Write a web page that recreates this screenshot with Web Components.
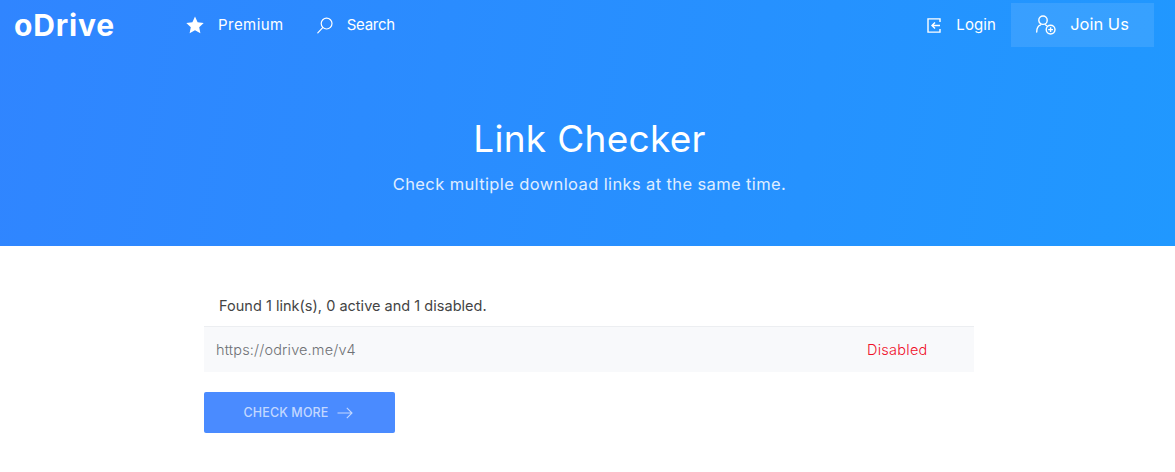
<!DOCTYPE html>
<html lang="en">
<head>
<meta charset="utf-8">
<title>oDrive - Link Checker</title>
<style>
  html, body { margin: 0; background: #fff; }
  body { font-family: Inter, "Noto Sans", sans-serif; }
</style>
</head>
<body>
<od-header>
  <od-nav slot="nav"></od-nav>
  <span slot="title">Link Checker</span>
  <span slot="subtitle">Check multiple download links at the same time.</span>
</od-header>
<od-checker>
  <od-result url="https://odrive.me/v4" status="Disabled"></od-result>
</od-checker>

<script>
const ICONS = {
    star: `<svg width="18" height="18" viewBox="0 0 18 18"><path fill="#fff" d="M9 .6l2.6 5.7 6.1.7-4.5 4.2 1.2 6.1L9 14.3l-5.4 3 1.2-6.1L.3 7l6.1-.7z"/></svg>`,
    search: `<svg width="16" height="17" viewBox="0 0 16 17" fill="none" stroke="#fff" stroke-width="1.2"><circle cx="9.6" cy="6.6" r="5.4"/><path stroke-linecap="round" d="M5.7 10.6L.8 15.8"/></svg>`,
    login: `<svg width="14" height="15" viewBox="0 0 14 15" fill="none" stroke="#fff" stroke-width="1.4"><path d="M13 4V.9H1v13.2h12V11"/><path d="M13 7.5H5.2M8 4.6L5 7.5l3 2.9"/></svg>`,
    join: `<svg width="20" height="20" viewBox="0 0 20 20" fill="none" stroke="#fff" stroke-width="1.4"><circle cx="7" cy="5.2" r="4.2"/><path stroke-linecap="round" d="M.7 17c0-3.8 1.8-6.5 4-7.2M9.4 9.8c.6.2 1 .5 1.4.9"/><circle cx="14.6" cy="14.6" r="4.4"/><path d="M14.6 12.2v4.8M12.2 14.6h4.8"/></svg>`,
    arrow: `<svg width="16" height="12" viewBox="0 0 16 12" fill="none" stroke="currentColor" stroke-width="1.1"><path d="M.5 6h14.5M9.8.8L15 6l-5.2 5.2"/></svg>`
};

class OdNav extends HTMLElement {
    constructor() {
        super();
        this.attachShadow({ mode: 'open' });
        this.shadowRoot.innerHTML = `
        <style>
            :host { display: flex; align-items: center; height: 50px; padding: 0 21px 0 14px; color: #fff; font-size: 15px; }
            .logo { font-size: 30px; font-weight: 700; letter-spacing: .85px; width: 172px; line-height: 50px; }
            a { display: flex; align-items: center; color: inherit; text-decoration: none; }
            a span { position: relative; top: -1px; }
            .premium { gap: 14px; margin-right: 33px; letter-spacing: .45px; }
            .search { gap: 14px; letter-spacing: -.25px; }
            .spacer { flex: 1; }
            .login { gap: 15px; margin-right: 15px; letter-spacing: .1px; }
            .join { gap: 14px; width: 143px; height: 44px; justify-content: center; background: rgba(255,255,255,.1); font-size: 16.5px; box-sizing: border-box; }
        </style>
        <span class="logo">oDrive</span>
        <a class="premium" href="#">${ICONS.star}<span>Premium</span></a>
        <a class="search" href="#">${ICONS.search}<span>Search</span></a>
        <span class="spacer"></span>
        <a class="login" href="#">${ICONS.login}<span>Login</span></a>
        <a class="join" href="#">${ICONS.join}<span>Join Us</span></a>`;
    }
}
customElements.define('od-nav', OdNav);

class OdHeader extends HTMLElement {
    constructor() {
        super();
        this.attachShadow({ mode: 'open' });
        this.shadowRoot.innerHTML = `
        <style>
            :host { display: block; height: 246px; color: #fff; background: linear-gradient(100deg, #3085ff 0%, #2098ff 100%); }
            .hero { display: flex; flex-direction: column; align-items: center; padding: 65px 0 0 4px; }
            .title { font-size: 37px; line-height: 48px; font-weight: 400; letter-spacing: .3px; }
            .sub { font-size: 16.5px; line-height: 24px; margin-top: 9px; opacity: .85; letter-spacing: .38px; }
        </style>
        <slot name="nav"></slot>
        <div class="hero">
            <div class="title"><slot name="title"></slot></div>
            <div class="sub"><slot name="subtitle"></slot></div>
        </div>`;
    }
}
customElements.define('od-header', OdHeader);

class OdResult extends HTMLElement {
    constructor() {
        super();
        this.attachShadow({ mode: 'open' });
    }

    connectedCallback() {
        this.shadowRoot.innerHTML = `
        <style>
            :host { display: flex; align-items: center; height: 45px; background: #f8f9fb; border-top: 1px solid #eceef1; font-size: 14.5px; font-weight: 300; }
            .url { flex: 1; padding-left: 12px; color: #6f7175; letter-spacing: .15px; }
            .status { width: 107px; color: #f0102a; letter-spacing: .25px; }
        </style>
        <span class="url">${this.getAttribute('url')}</span>
        <span class="status">${this.getAttribute('status')}</span>`;
    }
}
customElements.define('od-result', OdResult);

class OdChecker extends HTMLElement {
    constructor() {
        super();
        this.attachShadow({ mode: 'open' });
        this.shadowRoot.innerHTML = `
        <style>
            :host { display: block; width: 770px; margin-left: 204px; padding-top: 40px; box-sizing: border-box; }
            .found { height: 40px; line-height: 40px; padding-left: 15px; font-size: 14.5px; color: #444; letter-spacing: .02px; }
            button { display: flex; align-items: center; justify-content: center; gap: 9px; width: 191px; height: 41px; margin-top: 20px; padding: 0 2px 0 0; border: 0; border-radius: 2px; background: #4a8bff; color: #c3d8ff; font: 500 12.5px Inter, "Noto Sans", sans-serif; letter-spacing: .12px; }
        </style>
        <div class="found">Found 1 link(s), 0 active and 1 disabled.</div>
        <slot></slot>
        <button type="button">CHECK MORE ${ICONS.arrow}</button>`;
    }
}
customElements.define('od-checker', OdChecker);
</script>
</body>
</html>
